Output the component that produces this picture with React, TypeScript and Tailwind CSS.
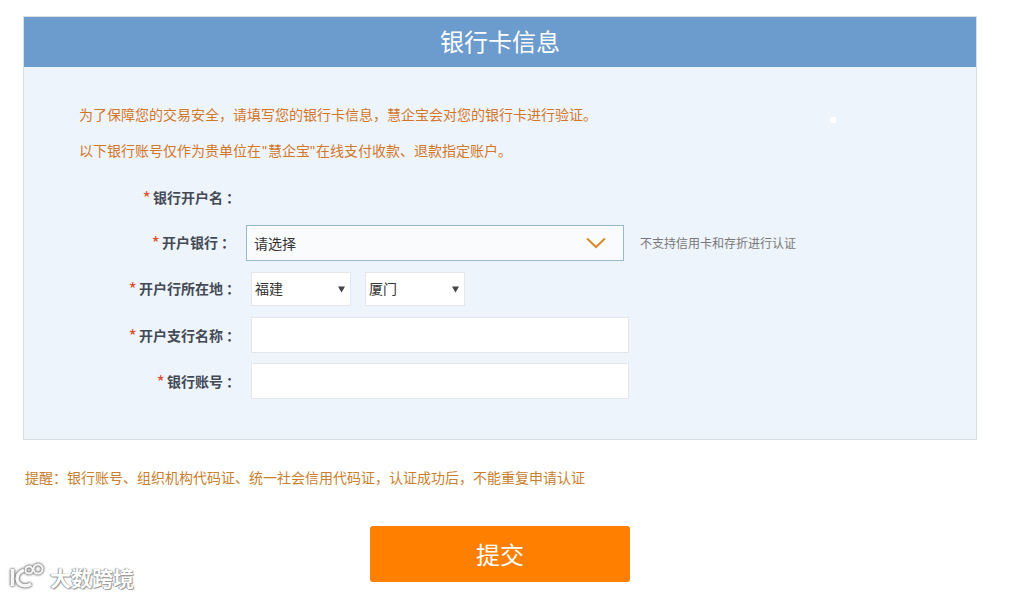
const cjk = { fontFamily: '"Microsoft YaHei", "Noto Sans CJK SC", sans-serif' };
const latin = { fontFamily: '"Liberation Sans", sans-serif' };

function Label({ text, className = '' }: { text: string; className?: string }) {
    return (
        <div className={`shrink-0 pb-[2px] text-right text-sm font-bold text-[#444a55] ${className}`}>
            <span className="mr-[2px] align-[-2px] text-lg font-normal leading-none text-[#d9502e]">*</span>
            {text}
            <span className="-mr-[3px] ml-[3px]">：</span>
        </div>
    );
}

function SmallSelect({ value }: { value: string }) {
    return (
        <div className="relative h-[34px] w-[100px]">
            <select
                defaultValue={value}
                className="h-full w-full appearance-none border border-[#e3e6ea] bg-white pb-[2px] pl-[3px] text-sm text-[#333]"
            >
                <option>{value}</option>
            </select>
            <svg className="absolute right-[6px] top-[14px]" width="7" height="7" viewBox="0 0 7 7">
                <path d="M0 0.5h7L3.5 6.5z" fill="#444" />
            </svg>
        </div>
    );
}

export default function App() {
    return (
        <div className="relative h-[596px] w-[1023px] overflow-hidden bg-white" style={cjk}>
            <div className="px-[23px] pt-4">
                <div className="w-[954px] border border-[#d9dee3] bg-[#eef4fc]">
                    <div className="flex h-[50px] items-center justify-center bg-[#6c9bce] pb-[2px] text-2xl text-white">
                        银行卡信息
                    </div>
                    <div className="h-[372px] pt-[29px]">
                        <div className="pl-[55px] text-sm leading-[36px] text-[#d2772a]">
                            <p>为了保障您的交易安全，请填写您的银行卡信息，慧企宝会对您的银行卡进行验证。</p>
                            <p>
                                以下银行账号仅作为贵单位在<span className="px-[1px]" style={latin}>"</span>慧企宝
                                <span className="pr-[1px]" style={latin}>"</span>在线支付收款、退款指定账户。
                            </p>
                        </div>
                        <div className="mt-[11px] flex h-9 items-center">
                            <Label text="银行开户名" className="w-[213px]" />
                        </div>
                        <div className="mt-[9px] flex items-center gap-[14px]">
                            <Label text="开户银行" className="w-[208px]" />
                            <div className="flex h-9 w-[378px] items-center justify-between border border-[#97bad2] bg-[#fafbfd] pb-[1px] pl-[7px] pr-[17px] text-sm text-[#333]">
                                <span>请选择</span>
                                <svg width="20" height="12" viewBox="0 0 20 12" fill="none">
                                    <path d="M1 1.5l9 8.5 9-8.5" stroke="#d98a2b" strokeWidth="2" />
                                </svg>
                            </div>
                            <span className="ml-[2px] text-xs text-[#777]">不支持信用卡和存折进行认证</span>
                        </div>
                        <div className="mt-[11px] flex items-center gap-[14px]">
                            <Label text="开户行所在地" className="w-[213px]" />
                            <SmallSelect value="福建" />
                            <SmallSelect value="厦门" />
                        </div>
                        <div className="mt-[11px] flex items-center gap-[14px]">
                            <Label text="开户支行名称" className="w-[213px] pt-[2px]" />
                            <input className="h-9 w-[378px] border border-[#e3e6ea] bg-white" />
                        </div>
                        <div className="mt-[10px] flex items-center gap-[14px]">
                            <Label text="银行账号" className="w-[213px] pt-[2px]" />
                            <input className="h-9 w-[378px] border border-[#e3e6ea] bg-white" />
                        </div>
                    </div>
                </div>
                <p className="ml-[2px] mt-[27px] text-sm leading-5 text-[#c9802e]">
                    提醒：银行账号、组织机构代码证、统一社会信用代码证，认证成功后，不能重复申请认证
                </p>
                <button className="ml-[347px] mt-[39px] block h-14 w-[260px] rounded-[3px] bg-[#ff7f00] text-2xl text-white">
                    提交
                </button>
            </div>

            {/* white speck on the panel */}
            <div className="absolute left-[830px] top-[117px] h-[6px] w-[6px] bg-white" />

            {/* watermark */}
            <div className="absolute left-[9px] top-[563px] flex items-center gap-[3px]">
                <svg
                    width="38"
                    height="28"
                    viewBox="0 0 38 28"
                    fill="none"
                    stroke="#f6f6f6"
                    strokeWidth="3.5"
                    style={{ filter: 'drop-shadow(0 0 1px #666) drop-shadow(0 0 1px #999)' }}
                >
                    <path d="M3.5 6v17" />
                    <path d="M15 7C8 10 7 15 9 19c2 4 8 5 13 2" />
                    <circle cx="20" cy="7" r="3.5" strokeWidth="2" />
                    <circle cx="29" cy="6" r="4.5" strokeWidth="2" />
                </svg>
                <span
                    className="text-[21px] font-bold leading-7 text-white"
                    style={{ textShadow: '0 0 1px #777, 1px 1px 1px #999, -1px 0 1px #aaa' }}
                >
                    大数跨境
                </span>
            </div>
        </div>
    );
}
